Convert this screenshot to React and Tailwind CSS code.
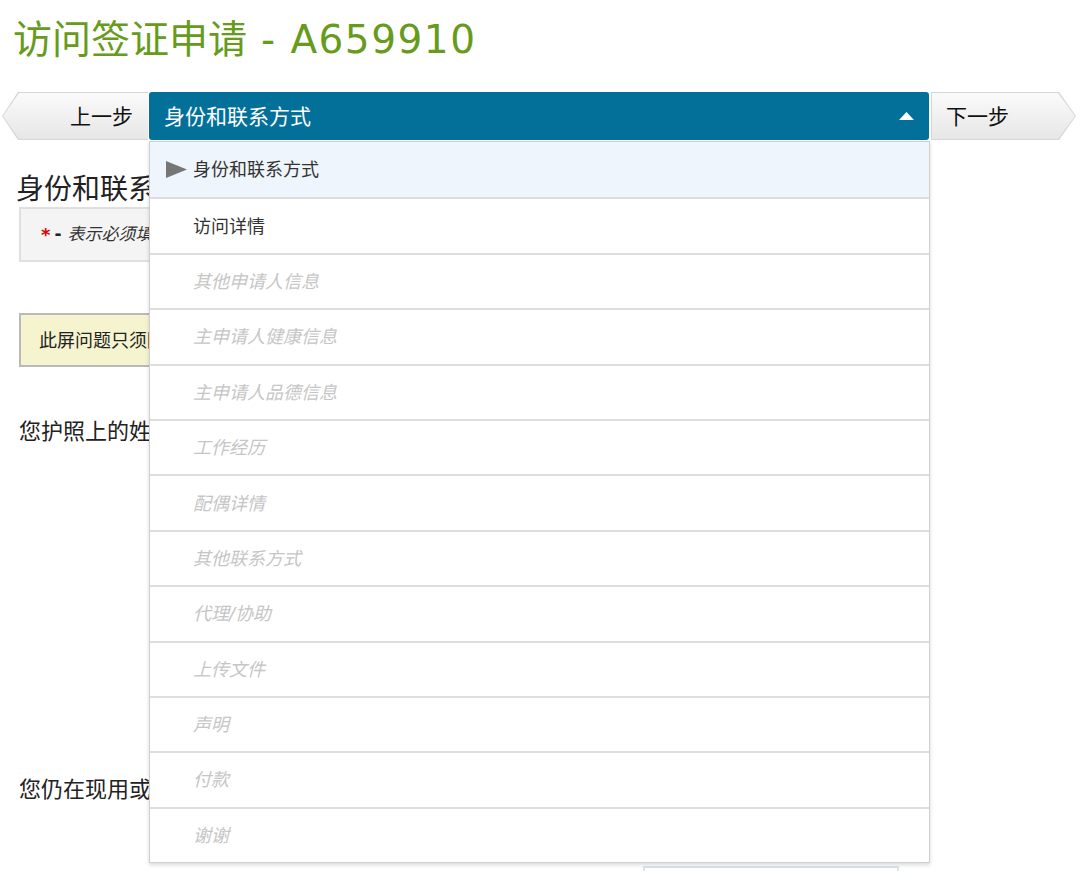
import React from 'react';

const steps = [
  { label: '身份和联系方式', state: 'active' },
  { label: '访问详情', state: 'done' },
  { label: '其他申请人信息' },
  { label: '主申请人健康信息' },
  { label: '主申请人品德信息' },
  { label: '工作经历' },
  { label: '配偶详情' },
  { label: '其他联系方式' },
  { label: '代理/协助' },
  { label: '上传文件' },
  { label: '声明' },
  { label: '付款' },
  { label: '谢谢' },
];

const font = { fontFamily: '"DejaVu Sans", "Noto Sans CJK SC", sans-serif' };

export default function App() {
  return (
    <div className="min-h-[871px] bg-white text-[#222] overflow-hidden" style={font}>
      <h1 className="ml-[13px] mt-[17px] text-[39px] leading-[46px] text-[#679b1c] font-normal">
        访问签证申请<span className="tracking-[1.5px]"> - A659910</span>
      </h1>

      <div className="relative mt-[29px]">
        <div className="flex h-[48px] gap-[1px]">
          {/* previous */}
          <div className="ml-[2px] w-[146px] h-full bg-[#d6d6d6] [clip-path:polygon(16px_0,100%_0,100%_100%,16px_100%,0_50%)]">
            <div className="h-full w-full bg-gradient-to-b from-[#fbfbfb] to-[#e6e6e6] flex items-center justify-end pr-[15px] pt-[3px] text-[21px] text-[#111] [clip-path:polygon(17px_1px,100%_1px,100%_calc(100%-1px),17px_calc(100%-1px),1px_50%)]">
              上一步
            </div>
          </div>

          {/* current */}
          <div className="w-[780px] h-full bg-[#03709a] rounded-[3px] flex items-center justify-between pl-[15px] pr-[15px] text-white text-[21px]">
            <span className="pt-[4px]">身份和联系方式</span>
            <svg width="15" height="8" viewBox="0 0 15 8">
              <polygon points="0,8 7.5,0 15,8" fill="#fff" />
            </svg>
          </div>

          {/* next */}
          <div className="ml-[1px] w-[145px] h-full bg-[#d6d6d6] [clip-path:polygon(0_0,calc(100%-17px)_0,100%_50%,calc(100%-17px)_100%,0_100%)]">
            <div className="h-full w-full bg-gradient-to-b from-[#fbfbfb] to-[#e6e6e6] flex items-center pl-[15px] pt-[3px] text-[21px] text-[#111] [clip-path:polygon(1px_1px,calc(100%-18px)_1px,calc(100%-1px)_50%,calc(100%-18px)_calc(100%-1px),1px_calc(100%-1px))]">
              下一步
            </div>
          </div>
        </div>

        {/* dropdown */}
        <div className="absolute left-[149px] top-[49px] w-[781px] bg-white border border-[#cfcfcf] shadow-[0_2px_4px_rgba(0,0,0,0.15)] z-10">
          {steps.map((s, i) => (
            <div
              key={s.label}
              className={`h-[55.4px] flex items-center text-[18px] ${i > 0 ? 'border-t-2 border-[#dedede]' : ''} ${
                s.state === 'active' ? 'bg-[#eef5fc] text-[#333]' : s.state === 'done' ? 'text-[#333]' : 'text-[#c6c6c6] italic'
              }`}
            >
              <div className="w-[43px] flex justify-end pr-[6px]">
                {s.state === 'active' && (
                  <svg width="21" height="17" viewBox="0 0 21 17">
                    <polygon points="0,0 21,8.5 0,17" fill="#767676" />
                  </svg>
                )}
              </div>
              <span>{s.label}</span>
            </div>
          ))}
        </div>
      </div>

      <div className="px-[19px]">
        <h2 className="-ml-[3px] mt-[33px] text-[28px] leading-[34px] text-[#222] font-normal">身份和联系方式</h2>
        <div className="w-[880px] h-[55px] bg-[#f4f4f4] border-2 border-[#e0e0e0] flex items-center pl-[20px] text-[17px]">
          <span className="text-[#e00000] text-[18px] font-bold">*</span>
          <span className="ml-[4px] font-bold">-</span>
          <span className="ml-[6px] italic text-[#333]">表示必须填写的信息</span>
        </div>

        <div className="mt-[51px] w-[880px] h-[54px] bg-[#f6f4cf] border-2 border-[#b9b9b9] flex items-center pl-[18px] text-[18px] text-[#222]">
          此屏问题只须回答一次
        </div>

        <p className="mt-[52px] text-[22px] leading-[26px] text-[#222]">您护照上的姓名</p>

        <p className="mt-[332px] text-[22px] leading-[26px] text-[#222]">您仍在现用或曾经使用过其他姓名吗？</p>

        <div className="mt-[63px] ml-[624px] w-[256px] h-[30px] border-2 border-[#dde3ea] bg-white" />
      </div>
    </div>
  );
}
